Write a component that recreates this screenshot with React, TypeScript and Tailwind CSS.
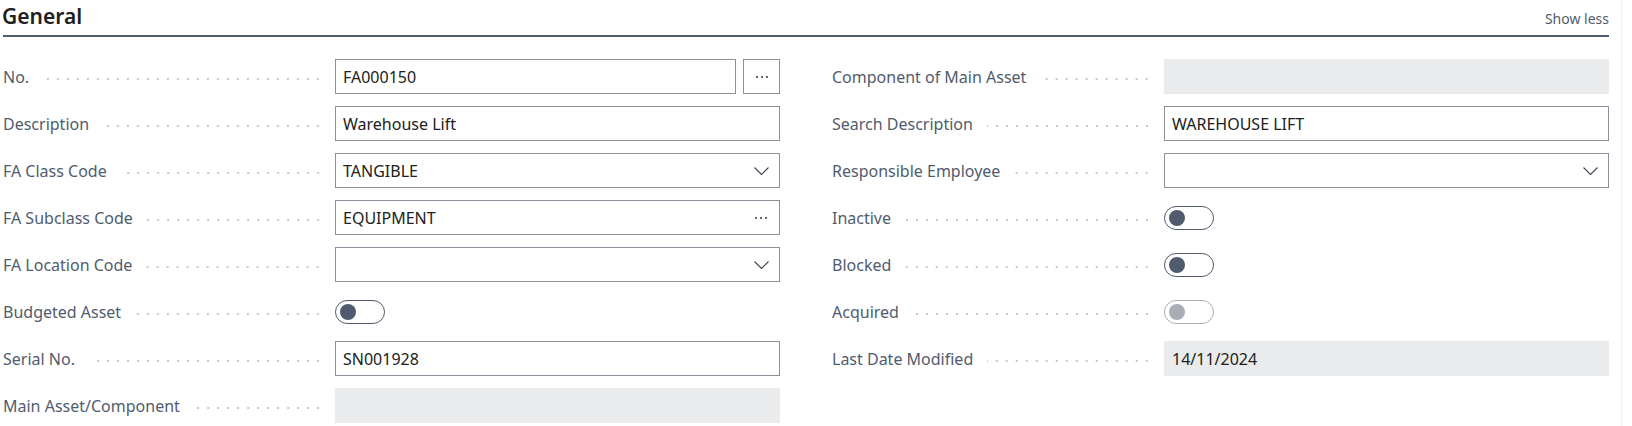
import { ReactNode } from 'react'

const font = { fontFamily: '"Noto Sans", "Open Sans", Arial, sans-serif' }

type Field =
  | { label: string; kind: 'text'; value: string; lookup?: boolean }
  | { label: string; kind: 'select'; value: string }
  | { label: string; kind: 'ellipsis'; value: string }
  | { label: string; kind: 'toggle'; disabled?: boolean }
  | { label: string; kind: 'readonly'; value: string }

const leftFields: Field[] = [
  { label: 'No.', kind: 'text', value: 'FA000150', lookup: true },
  { label: 'Description', kind: 'text', value: 'Warehouse Lift' },
  { label: 'FA Class Code', kind: 'select', value: 'TANGIBLE' },
  { label: 'FA Subclass Code', kind: 'ellipsis', value: 'EQUIPMENT' },
  { label: 'FA Location Code', kind: 'select', value: '' },
  { label: 'Budgeted Asset', kind: 'toggle' },
  { label: 'Serial No.', kind: 'text', value: 'SN001928' },
  { label: 'Main Asset/Component', kind: 'readonly', value: '' },
]

const rightFields: Field[] = [
  { label: 'Component of Main Asset', kind: 'readonly', value: '' },
  { label: 'Search Description', kind: 'text', value: 'WAREHOUSE LIFT' },
  { label: 'Responsible Employee', kind: 'select', value: '' },
  { label: 'Inactive', kind: 'toggle' },
  { label: 'Blocked', kind: 'toggle' },
  { label: 'Acquired', kind: 'toggle', disabled: true },
  { label: 'Last Date Modified', kind: 'readonly', value: '14/11/2024' },
]

function Chevron() {
  return (
    <svg width="15" height="8" viewBox="0 0 15 8" className="shrink-0">
      <polyline points="0.5,0.5 7.5,7.5 14.5,0.5" fill="none" stroke="#3b4350" strokeWidth="1.1" />
    </svg>
  )
}

function Dots() {
  return (
    <span className="flex items-center gap-[3px]">
      <span className="w-[2px] h-[2px] rounded-full bg-[#2b2f36]" />
      <span className="w-[2px] h-[2px] rounded-full bg-[#2b2f36]" />
      <span className="w-[2px] h-[2px] rounded-full bg-[#2b2f36]" />
    </span>
  )
}

function Toggle({ disabled }: { disabled?: boolean }) {
  return (
    <div className={`w-[50px] h-[24px] rounded-full border flex items-center pl-[4px] ${disabled ? 'border-[#a9aeb6]' : 'border-[#505c6d]'}`}>
      <span className={`w-[16px] h-[16px] rounded-full ${disabled ? 'bg-[#a9aeb6]' : 'bg-[#505c6d]'}`} />
    </div>
  )
}

function Control({ f }: { f: Field }) {
  const box = 'flex-1 h-[35px] flex items-center px-[7px] text-[16px] text-[#212121]'
  switch (f.kind) {
    case 'text':
      return (
        <div className="flex-1 flex gap-[7px]">
          <div className={`${box} border border-[#8a9099]`}>{f.value}</div>
          {f.lookup && (
            <div className="w-[37px] h-[35px] border border-[#8a9099] flex items-center justify-center">
              <Dots />
            </div>
          )}
        </div>
      )
    case 'select':
      return (
        <div className={`${box} border border-[#8a9099] justify-between pr-[10px]`}>
          <span>{f.value}</span>
          <Chevron />
        </div>
      )
    case 'ellipsis':
      return (
        <div className={`${box} border border-[#8a9099] justify-between pr-[12px]`}>
          <span>{f.value}</span>
          <Dots />
        </div>
      )
    case 'toggle':
      return (
        <div className="flex-1 h-[35px] flex items-center">
          <Toggle disabled={f.disabled} />
        </div>
      )
    case 'readonly':
      return <div className={`${box} bg-[#eaebec] pl-[8px]`}>{f.value}</div>
  }
}

function Row({ f }: { f: Field }) {
  return (
    <div className="flex h-[35px] items-center">
      <div className="w-[332px] shrink-0 flex items-center pr-[12px]">
        <span className="text-[16px] text-[#505c6d] whitespace-nowrap pr-[14px]">{f.label}</span>
        <span className="flex-1 h-[4px] mt-[5px] bg-[radial-gradient(circle,#c6c8cc_1px,transparent_1.3px)] bg-[length:10px_4px] bg-repeat-x bg-right" />
      </div>
      <Control f={f} />
    </div>
  )
}

function Column({ fields }: { fields: Field[] }): ReactNode {
  return (
    <div className="flex flex-col gap-[12px]">
      {fields.map(f => <Row key={f.label} f={f} />)}
    </div>
  )
}

export default function App() {
  return (
    <div className="w-[1632px] h-[426px] bg-white overflow-hidden flex" style={font}>
      <div className="w-[1622px] border-r border-[#efefef] pl-[3px] pr-[12px]">
        {/* Header */}
        <div className="h-[37px] flex items-center justify-between border-b-2 border-[#505c6d] pb-[1px]">
          <h2 className="text-[21px] font-semibold text-[#212121] -ml-[1px]">General</h2>
          <button className="text-[14px] text-[#505c6d] mt-[3px]">Show less</button>
        </div>

        <div className="grid grid-cols-2 gap-x-[52px] mt-[22px]">
          <Column fields={leftFields} />
          <Column fields={rightFields} />
        </div>
      </div>
    </div>
  )
}
